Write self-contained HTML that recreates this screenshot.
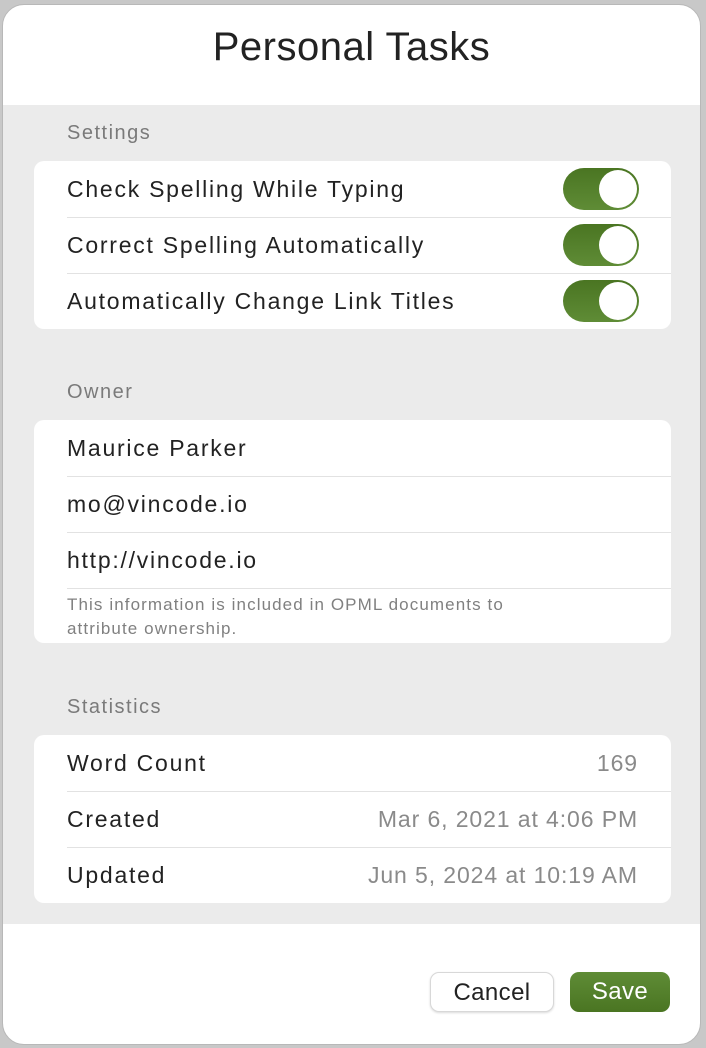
<!DOCTYPE html>
<html><head><style>
*{margin:0;padding:0;box-sizing:border-box}
body{width:706px;height:1048px;background:#c8c8c8;font-family:"Liberation Sans",sans-serif;position:relative;overflow:hidden}
.win{position:absolute;left:2px;top:4px;width:699px;height:1041px;background:#fff;border-radius:22px;overflow:hidden;border:1px solid #b8b8b8}
.title{position:absolute;top:20px;left:0;width:100%;text-align:center;font-size:40px;color:#222;letter-spacing:0.5px}
.gray{position:absolute;top:100px;left:0;width:100%;height:819px;background:#ebebeb}
.h{position:absolute;left:64px;font-size:20px;color:#7a7a7a;letter-spacing:1.5px}
.card{position:absolute;left:31px;width:637px;background:#fff;border-radius:10px}
.row{height:56px;position:relative;font-size:23px;color:#222;line-height:56px;padding-left:33px;letter-spacing:1.75px}
.row+.row::before{content:"";position:absolute;top:0;left:33px;right:0;border-top:1px solid #e2e2e2}
.tg{position:absolute;right:32px;top:7px;width:76px;height:42px;border-radius:21px;background:linear-gradient(#4a7522,#5f8c36)}
.tg::after{content:"";position:absolute;right:2px;top:2px;width:38px;height:38px;border-radius:50%;background:#fff}
.v{position:absolute;right:33px;top:0;color:#8a8a8a;letter-spacing:0.9px}
.note{font-size:17px;color:#808080;padding:5px 110px 0 33px;line-height:24px;height:55px;position:relative;letter-spacing:1.1px}
.note::before{content:"";position:absolute;top:0;left:33px;right:0;border-top:1px solid #e2e2e2}
.btn{position:absolute;top:967px;height:40px;border-radius:9px;font-size:24px;text-align:center;line-height:40px;letter-spacing:0.4px}
</style></head><body>
<div class="win">
<div class="title">Personal Tasks</div>
<div class="gray">
<div class="h" style="top:17px">Settings</div>
<div class="card" style="top:56px">
<div class="row">Check Spelling While Typing<div class="tg"></div></div>
<div class="row">Correct Spelling Automatically<div class="tg"></div></div>
<div class="row">Automatically Change Link Titles<div class="tg"></div></div>
</div>
<div class="h" style="top:276px">Owner</div>
<div class="card" style="top:315px">
<div class="row">Maurice Parker</div>
<div class="row">mo@vincode.io</div>
<div class="row">http://vincode.io</div>
<div class="note">This information is included in OPML documents to attribute ownership.</div>
</div>
<div class="h" style="top:591px">Statistics</div>
<div class="card" style="top:630px">
<div class="row">Word Count<span class="v">169</span></div>
<div class="row">Created<span class="v">Mar 6, 2021 at 4:06 PM</span></div>
<div class="row">Updated<span class="v">Jun 5, 2024 at 10:19 AM</span></div>
</div>
</div>
<div class="btn" style="left:427px;width:124px;background:#fff;border:1px solid #d8d8d8;box-shadow:0 1px 2px rgba(0,0,0,.15);color:#222">Cancel</div>
<div class="btn" style="left:567px;width:100px;background:linear-gradient(#5f8c36,#4a7522);color:#fff">Save</div>
</div>
</body></html>
